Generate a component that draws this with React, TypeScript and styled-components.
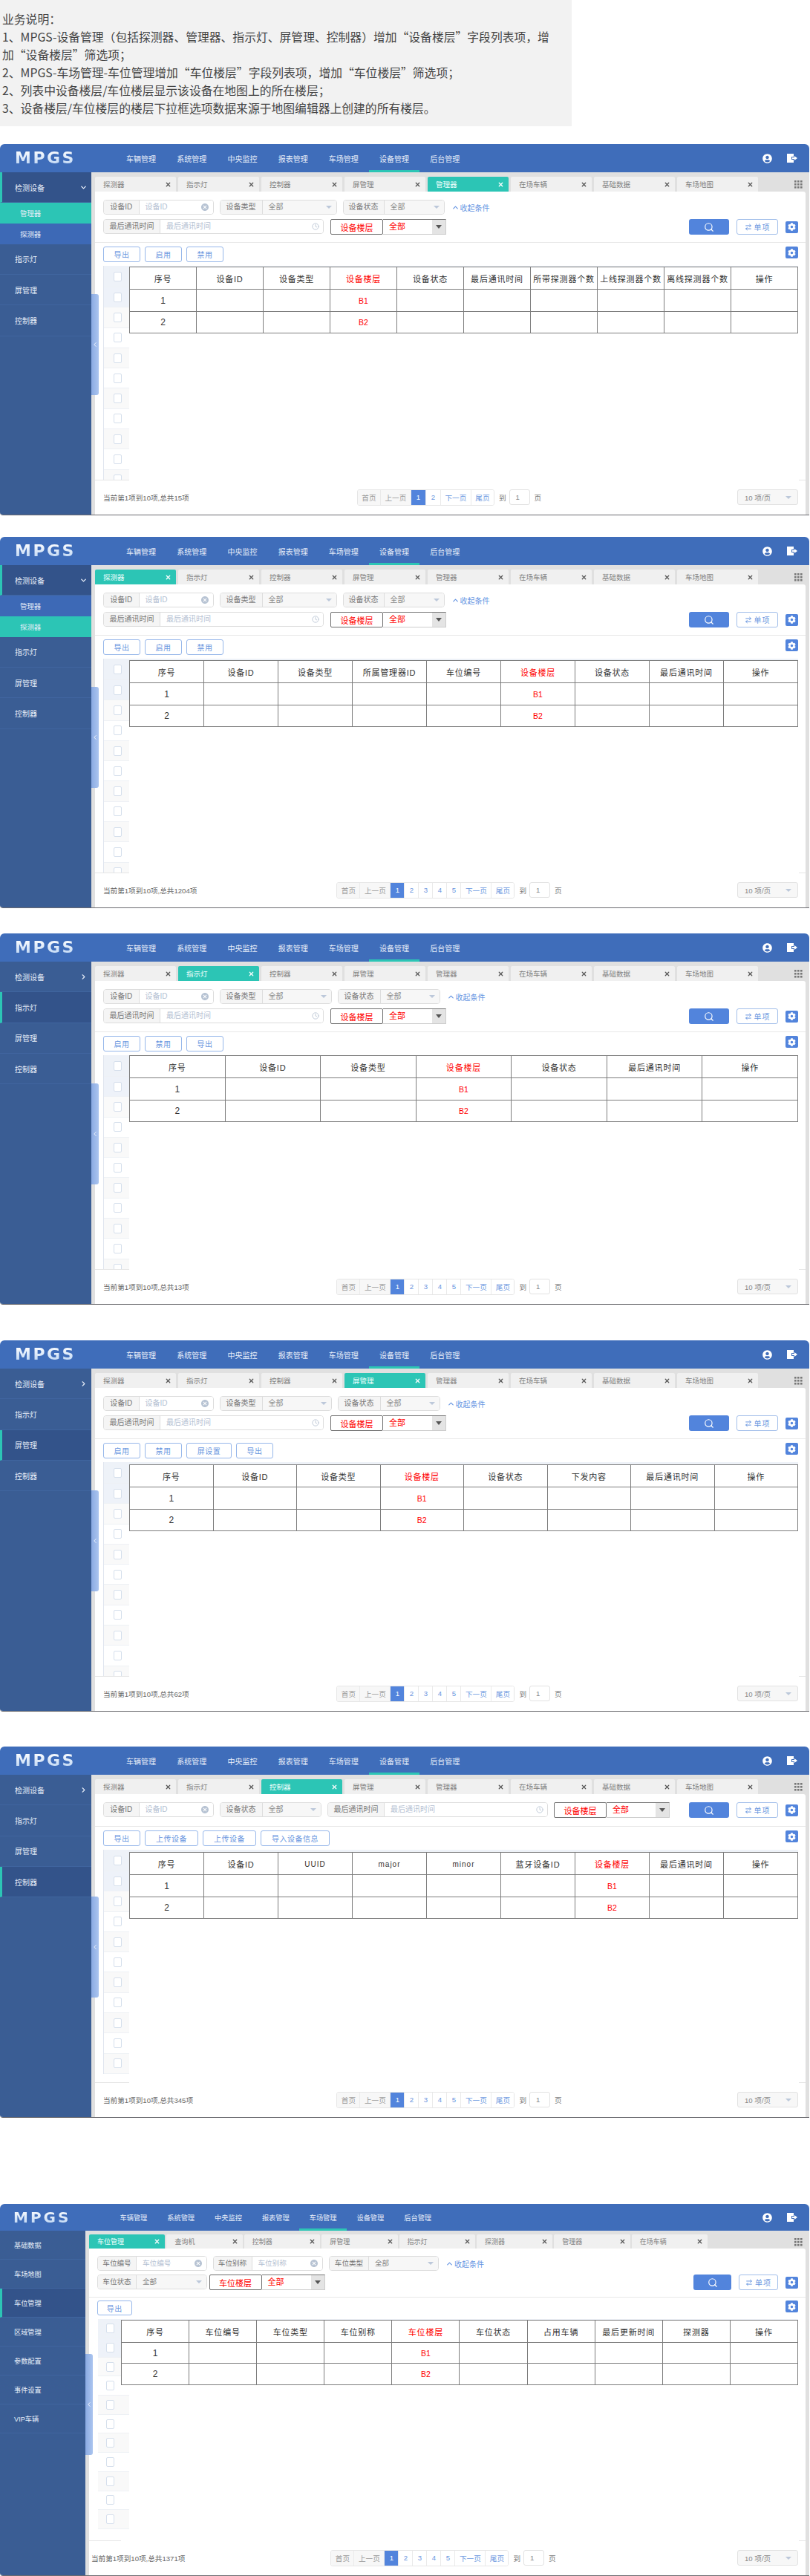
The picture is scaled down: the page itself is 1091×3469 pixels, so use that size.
import React from "react";
import styled, { createGlobalStyle } from "styled-components";
import { ArrowRightLeft, ChevronDown, ChevronLeft, ChevronRight, ChevronUp, Clock, Search, X } from "lucide-react";
import { FaCog, FaUserCircle } from "react-icons/fa";
import { MdCancel } from "react-icons/md";

type Field = {
  kind: "input" | "select" | "time";
  label: string;
  value: string;
  w: number;
  labelW: number;
};

type Screen = {
  top: number;
  height: number;
  compact?: boolean;
  tabs: string[];
  activeTab: number;
  side: { name: string; active?: boolean; open?: boolean; arrow?: boolean; sub?: { name: string; active?: boolean }[] }[];
  activeNav: number;
  row1: Field[];
  row2?: Field[];
  floorLabel: string;
  filterH: number;
  actions: { text: string; w: number }[];
  columns: string[];
  tableOffset: number;
  total: string;
  pages: number;
};

const deviceTabs = ["探测器", "指示灯", "控制器", "屏管理", "管理器", "在场车辆", "基础数据", "车场地图"];
const navItems = ["车辆管理", "系统管理", "中央监控", "报表管理", "车场管理", "设备管理", "后台管理"];

const idField: Field = { kind: "input", label: "设备ID", value: "设备ID", w: 148.5, labelW: 47.5 };
const timeField: Field = { kind: "time", label: "最后通讯时间", value: "最后通讯时间", w: 297, labelW: 76 };
const typeWide: Field = { kind: "select", label: "设备类型", value: "全部", w: 158, labelW: 57 };
const typeNarrow: Field = { kind: "select", label: "设备类型", value: "全部", w: 151, labelW: 57 };
const stateWide: Field = { kind: "select", label: "设备状态", value: "全部", w: 137, labelW: 55 };
const stateNarrow: Field = { kind: "select", label: "设备状态", value: "全部", w: 138, labelW: 57 };

const deviceSide = (current: string): Screen["side"] => [
  { name: "检测设备", arrow: true },
  { name: "指示灯", active: current === "指示灯" },
  { name: "屏管理", active: current === "屏管理" },
  { name: "控制器", active: current === "控制器" },
];

const openSide = (sub: string): Screen["side"] => [
  {
    name: "检测设备",
    open: true,
    arrow: true,
    sub: [
      { name: "管理器", active: sub === "管理器" },
      { name: "探测器", active: sub === "探测器" },
    ],
  },
  { name: "指示灯" },
  { name: "屏管理" },
  { name: "控制器" },
];

const btn = (text: string, w = 50) => ({ text, w });

const screens: Screen[] = [
  {
    top: 24,
    height: 500,
    tabs: deviceTabs,
    activeTab: 4,
    side: openSide("管理器"),
    activeNav: 5,
    row1: [idField, typeWide, stateWide],
    row2: [timeField],
    floorLabel: "设备楼层",
    filterH: 68,
    actions: [btn("导出"), btn("启用"), btn("禁用")],
    columns: ["序号", "设备ID", "设备类型", "设备楼层", "设备状态", "最后通讯时间", "所带探测器个数", "上线探测器个数", "离线探测器个数", "操作"],
    tableOffset: 1,
    total: "当前第1项到10项,总共15项",
    pages: 2,
  },
  {
    top: 29,
    height: 500,
    tabs: deviceTabs,
    activeTab: 0,
    side: openSide("探测器"),
    activeNav: 5,
    row1: [idField, typeWide, stateWide],
    row2: [timeField],
    floorLabel: "设备楼层",
    filterH: 68,
    actions: [btn("导出"), btn("启用"), btn("禁用")],
    columns: ["序号", "设备ID", "设备类型", "所属管理器ID", "车位编号", "设备楼层", "设备状态", "最后通讯时间", "操作"],
    tableOffset: 2,
    total: "当前第1项到10项,总共1204项",
    pages: 5,
  },
  {
    top: 34,
    height: 500,
    tabs: deviceTabs,
    activeTab: 1,
    side: deviceSide("指示灯"),
    activeNav: 5,
    row1: [idField, typeNarrow, stateNarrow],
    row2: [timeField],
    floorLabel: "设备楼层",
    filterH: 68,
    actions: [btn("启用"), btn("禁用"), btn("导出")],
    columns: ["序号", "设备ID", "设备类型", "设备楼层", "设备状态", "最后通讯时间", "操作"],
    tableOffset: 0,
    total: "当前第1项到10项,总共13项",
    pages: 5,
  },
  {
    top: 48,
    height: 500,
    tabs: deviceTabs,
    activeTab: 3,
    side: deviceSide("屏管理"),
    activeNav: 5,
    row1: [idField, typeNarrow, stateNarrow],
    row2: [timeField],
    floorLabel: "设备楼层",
    filterH: 68,
    actions: [btn("启用"), btn("禁用"), btn("屏设置", 61), btn("导出")],
    columns: ["序号", "设备ID", "设备类型", "设备楼层", "设备状态", "下发内容", "最后通讯时间", "操作"],
    tableOffset: 3,
    total: "当前第1项到10项,总共62项",
    pages: 5,
  },
  {
    top: 47,
    height: 500,
    tabs: deviceTabs,
    activeTab: 2,
    side: deviceSide("控制器"),
    activeNav: 5,
    row1: [idField, { ...stateWide, w: 137.5, labelW: 57 }, timeField],
    floorLabel: "设备楼层",
    filterH: 43,
    actions: [btn("导出"), btn("上传设备", 72), btn("上传设备", 72), btn("导入设备信息", 93)],
    columns: ["序号", "设备ID", "UUID", "major", "minor", "蓝牙设备ID", "设备楼层", "最后通讯时间", "操作"],
    tableOffset: 3,
    total: "当前第1项到10项,总共345项",
    pages: 5,
  },
  {
    top: 116,
    height: 501,
    compact: true,
    tabs: ["车位管理", "查询机", "控制器", "屏管理", "指示灯", "探测器", "管理器", "在场车辆"],
    activeTab: 0,
    side: [
      { name: "基础数据" },
      { name: "车场地图" },
      { name: "车位管理", active: true },
      { name: "区域管理" },
      { name: "参数配置" },
      { name: "事件设置" },
      { name: "VIP车辆" },
    ],
    activeNav: 4,
    row1: [
      { kind: "input", label: "车位编号", value: "车位编号", w: 147.5, labelW: 52 },
      { kind: "input", label: "车位别称", value: "车位别称", w: 148.5, labelW: 52 },
      { kind: "select", label: "车位类型", value: "全部", w: 148, labelW: 53 },
    ],
    row2: [{ kind: "select", label: "车位状态", value: "全部", w: 147.5, labelW: 52 }],
    floorLabel: "车位楼层",
    filterH: 65,
    actions: [btn("导出", 46.5)],
    columns: ["序号", "车位编号", "车位类型", "车位别称", "车位楼层", "车位状态", "占用车辆", "最后更新时间", "探测器", "操作"],
    tableOffset: 1,
    total: "当前第1项到10项,总共1371项",
    pages: 5,
  },
];

const FONT = `"Liberation Sans", "Noto Sans CJK SC", sans-serif`;

const GlobalStyle = createGlobalStyle`
  html, body {
    margin: 0;
    padding: 0;
    background: #fff;
  }
  * {
    box-sizing: border-box;
  }
  body {
    font-family: ${FONT};
  }
`;

const Page = styled.div`
  width: 1091px;
`;

const Notes = styled.div`
  width: 770px;
  height: 170px;
  padding: 14px 18px 0 3px;
  background: #f2f2f2;
  color: #444;
  font-family: "Noto Sans CJK SC", sans-serif;
  font-size: 15.8px;
  line-height: 24px;
`;

const Frame = styled.section<{ $top: number; $height: number }>`
  position: relative;
  width: 1090px;
  height: ${(p) => p.$height}px;
  margin-top: ${(p) => p.$top}px;
  display: flex;
  flex-direction: column;
  overflow: hidden;
  border-radius: 6px 6px 0 4px;
  border-bottom: 1px solid #6b6b70;
`;

const TopBar = styled.header<{ $compact?: boolean }>`
  height: ${(p) => (p.$compact ? 36 : 38)}px;
  flex: none;
  display: flex;
  align-items: stretch;
  background: #3f6dba;
`;

const Logo = styled.div<{ $compact?: boolean }>`
  width: ${(p) => (p.$compact ? 78 : 82)}px;
  margin-left: ${(p) => (p.$compact ? 18 : 20)}px;
  align-self: center;
  font-family: "DejaVu Sans", sans-serif;
  font-weight: 700;
  font-size: ${(p) => (p.$compact ? 20 : 22)}px;
  line-height: 22px;
  letter-spacing: ${(p) => (p.$compact ? 3 : 2.5)}px;
  white-space: nowrap;
  background: linear-gradient(#ffffff, #b9d3f3);
  -webkit-background-clip: text;
  background-clip: text;
  color: transparent;
`;

const TopNav = styled.nav<{ $compact?: boolean }>`
  display: flex;
  margin-left: ${(p) => (p.$compact ? 52 : 54)}px;
`;

const NavItem = styled.a<{ $active?: boolean; $compact?: boolean }>`
  width: ${(p) => (p.$compact ? 63.8 : 68.2)}px;
  display: flex;
  align-items: center;
  justify-content: center;
  color: #e8eef9;
  font-size: ${(p) => (p.$compact ? 9.2 : 10)}px;
  box-shadow: ${(p) => (p.$active ? "inset 0 -3px 0 #2cc5b5" : "none")};
`;

const TopIcons = styled.div`
  margin-left: auto;
  margin-right: 16px;
  display: flex;
  align-items: center;
  gap: 20px;
  color: #fff;
`;

const Body = styled.div`
  flex: 1;
  min-height: 0;
  display: flex;
`;

const SideBar = styled.aside<{ $compact?: boolean }>`
  width: ${(p) => (p.$compact ? 115 : 123)}px;
  flex: none;
  background: #3a5d94;
`;

const SideItem = styled.div<{ $active?: boolean; $compact?: boolean }>`
  height: ${(p) => (p.$compact ? 39 : 41.3)}px;
  display: flex;
  align-items: center;
  justify-content: space-between;
  padding: 0 5px 0 ${(p) => (p.$compact ? 19 : 20)}px;
  color: #e6edf8;
  font-size: ${(p) => (p.$compact ? 9.2 : 10)}px;
  background: ${(p) => (p.$active ? "#33538a" : "transparent")};
  border-bottom: 1px solid #40659f;
  border-left: ${(p) => (p.$active ? "3px solid #2cc5b5" : "0")};
  padding-left: ${(p) => (p.$active ? (p.$compact ? 16 : 17) : p.$compact ? 19 : 20)}px;
`;

const SubItem = styled.div<{ $active?: boolean }>`
  height: 27.7px;
  display: flex;
  align-items: center;
  padding-left: 27px;
  color: #e6edf8;
  font-size: 9.4px;
  background: ${(p) => (p.$active ? "#2cc5b5" : "#3d69b6")};
`;

const Main = styled.main`
  flex: 1;
  min-width: 0;
  display: flex;
  flex-direction: column;
  padding: 0 5px;
  background: #e0e0e0;
`;

const TabRow = styled.div<{ $compact?: boolean }>`
  height: ${(p) => (p.$compact ? 24 : 26)}px;
  flex: none;
  padding-top: ${(p) => (p.$compact ? 5 : 6)}px;
  display: flex;
  gap: ${(p) => (p.$compact ? 2 : 3)}px;
`;

const Tab = styled.div<{ $active?: boolean; $compact?: boolean }>`
  width: ${(p) => (p.$compact ? 102.4 : 109)}px;
  display: flex;
  align-items: center;
  justify-content: space-between;
  padding: 0 6px 0 11px;
  font-size: ${(p) => (p.$compact ? 9 : 9.5)}px;
  border-radius: 2px 2px 0 0;
  background: ${(p) => (p.$active ? "#2cc5b5" : "#f0f0f0")};
  color: ${(p) => (p.$active ? "#f2fffd" : "#808080")};
  svg {
    color: ${(p) => (p.$active ? "#fff" : "#555")};
  }
`;

const AppsIcon = styled.svg`
  margin: 5px 4px 0 auto;
  flex: none;
`;

const Content = styled.div`
  flex: 1;
  min-height: 0;
  display: flex;
  flex-direction: column;
  background: #fff;
  border-radius: 0 3px 0 0;
`;

const FilterArea = styled.div<{ $h: number; $compact?: boolean }>`
  height: ${(p) => p.$h + 1}px;
  flex: none;
  padding: ${(p) => (p.$compact ? 10 : 11)}px 10px 0 11px;
  display: flex;
  flex-direction: column;
  gap: ${(p) => (p.$compact ? 5 : 6)}px;
  border-bottom: 1px solid #e8e8e8;
`;

const FilterRow = styled.div<{ $gap?: number }>`
  height: 20px;
  display: flex;
  align-items: flex-start;
  gap: ${(p) => p.$gap ?? 8}px;
`;

const FieldBox = styled.div<{ $w: number; $compact?: boolean }>`
  width: ${(p) => p.$w}px;
  height: 20px;
  flex: none;
  display: flex;
  border: 1px solid #ddd;
  border-radius: 4px;
  overflow: hidden;
  font-size: ${(p) => (p.$compact ? 9.6 : 10)}px;
  line-height: 18px;
  background: #fff;
`;

const FieldLabel = styled.div<{ $w: number }>`
  width: ${(p) => p.$w}px;
  flex: none;
  text-align: center;
  color: #777;
  background: #f5f5f5;
  border-right: 1px solid #ddd;
  white-space: nowrap;
`;

const FieldValue = styled.div<{ $select?: boolean }>`
  flex: 1;
  min-width: 0;
  display: flex;
  align-items: center;
  justify-content: space-between;
  padding: 0 5px 0 8px;
  background: ${(p) => (p.$select ? "#f7f7f7" : "#fff")};
  color: ${(p) => (p.$select ? "#888" : "#b5c1d2")};
`;

const Caret = styled.span`
  width: 0;
  height: 0;
  margin-right: 1px;
  border-left: 4px solid transparent;
  border-right: 4px solid transparent;
  border-top: 4px solid #bcc8da;
`;

const Collapse = styled.a`
  height: 20px;
  margin-left: 1px;
  display: flex;
  align-items: center;
  gap: 1px;
  color: #6594e2;
  font-size: 10px;
  white-space: nowrap;
`;

const FloorLabel = styled.div`
  width: 71px;
  height: 21px;
  flex: none;
  display: flex;
  align-items: center;
  justify-content: center;
  border: 1px solid #6e6e6e;
  border-radius: 2px;
  color: #f00;
  font-size: 11px;
  background: #fff;
`;

const FloorSelect = styled.div`
  width: 85px;
  height: 21px;
  flex: none;
  display: flex;
  justify-content: space-between;
  border-top: 1px solid #777;
  border-right: 1px solid #ccc;
  border-bottom: 1px solid #ccc;
  color: #f00;
  font-size: 11px;
  line-height: 19px;
  padding-left: 8px;
  background: #fff;
`;

const FloorArrow = styled.span`
  width: 18px;
  display: flex;
  align-items: center;
  justify-content: center;
  background: #e4e4e4;
  &::after {
    content: "";
    border-left: 4px solid transparent;
    border-right: 4px solid transparent;
    border-top: 5px solid #555;
  }
`;

const Floor = styled.div`
  display: flex;
  flex: none;
`;

const RightTools = styled.div`
  margin-left: auto;
  display: flex;
  align-items: center;
  gap: 10px;
`;

const SearchButton = styled.button<{ $compact?: boolean }>`
  width: ${(p) => (p.$compact ? 51 : 54)}px;
  height: 21px;
  display: flex;
  align-items: center;
  justify-content: center;
  padding: 0;
  border: 0;
  border-radius: 3px;
  background: #5284dc;
  color: #fff;
`;

const ModeButton = styled.button<{ $compact?: boolean }>`
  width: ${(p) => (p.$compact ? 53 : 56)}px;
  height: 21px;
  display: flex;
  align-items: center;
  justify-content: center;
  gap: 3px;
  padding: 0;
  border: 1px solid #a3bfea;
  border-radius: 3px;
  background: #fff;
  color: #6a97e0;
  font-family: ${FONT};
  font-size: 10px;
  letter-spacing: 1px;
`;

const GearButton = styled.button`
  width: 17px;
  height: 16px;
  flex: none;
  display: flex;
  align-items: center;
  justify-content: center;
  padding: 0;
  border: 0;
  border-radius: 2px;
  background: #5284dc;
  color: #fff;
`;

const ActionRow = styled.div<{ $compact?: boolean }>`
  flex: none;
  height: ${(p) => (p.$compact ? 29 : 31)}px;
  padding: ${(p) => (p.$compact ? 4 : 5)}px 10px 0 11px;
  display: flex;
  align-items: flex-start;
  gap: 6px;
`;

const ActionButton = styled.button<{ $w: number; $compact?: boolean }>`
  width: ${(p) => p.$w}px;
  height: ${(p) => (p.$compact ? 20 : 21)}px;
  padding: 0;
  border: 1px solid #96b7ea;
  border-radius: 3px;
  background: #fff;
  color: #6a97e0;
  font-family: ${FONT};
  font-size: 10px;
  letter-spacing: 0.5px;
`;

const GearSlot = styled.div`
  margin-left: auto;
`;

const GridArea = styled.div`
  flex: 1;
  min-height: 0;
  display: flex;
  align-items: flex-start;
  overflow: hidden;
  margin: 0 10px 0 11px;
`;

const CheckColumn = styled.div<{ $compact?: boolean }>`
  width: ${(p) => (p.$compact ? 43 : 35)}px;
  flex: none;
  border-left: 1px solid ${(p) => (p.$compact ? "#fff" : "#dfe5ee")};
`;

const CheckRow = styled.div<{ $tone: string; $h: number; $left: number }>`
  height: ${(p) => p.$h}px;
  padding-left: ${(p) => p.$left}px;
  display: flex;
  align-items: center;
  background: ${(p) => p.$tone};
  border-bottom: 1px solid #eef1f5;
`;

const CheckBox = styled.span`
  width: 11px;
  height: 13px;
  border: 1px solid #d5dfec;
  border-radius: 2px;
  background: #fff;
`;

const TableSlot = styled.div<{ $offset: number; $compact?: boolean }>`
  flex: 1;
  min-width: 0;
  position: relative;
  margin-left: ${(p) => (p.$compact ? -11 : 0)}px;
  padding-top: ${(p) => p.$offset}px;
  background: linear-gradient(#eef2f8, #eef2f8) top / 100% ${(p) => p.$offset}px no-repeat;
`;

const DataTable = styled.table`
  width: 100%;
  table-layout: fixed;
  border-collapse: collapse;
  background: #fff;
  color: #333;
  font-size: 12px;
  text-align: center;
  th,
  td {
    padding: 0;
    border: 1px solid #7d7d7d;
    font-weight: 400;
    white-space: nowrap;
    overflow: hidden;
  }
  th {
    font-size: 11px;
    letter-spacing: 0.8px;
  }
`;

const RedCell = styled.span<{ $small?: boolean }>`
  color: #f00;
  font-size: ${(p) => (p.$small ? 10.5 : 11)}px;
`;

const LatinHead = styled.span`
  font-size: 10px;
  letter-spacing: 1px;
`;

const Footer = styled.footer<{ $compact?: boolean }>`
  position: relative;
  height: 47px;
  flex: none;
  display: grid;
  grid-template-columns: 1fr auto 1fr;
  align-items: center;
  padding: 0 10px 0 ${(p) => (p.$compact ? 3 : 11)}px;
  color: #666;
  font-size: 9.6px;
  &::before,
  &::after {
    content: "";
    position: absolute;
    top: 0;
    height: 1px;
    background: #e6e6e6;
  }
  &::before {
    left: 0;
    width: ${(p) => (p.$compact ? 43 : 46)}px;
  }
  &::after {
    right: 0;
    width: 9px;
  }
`;

const Pager = styled.div`
  display: flex;
  align-items: center;
`;

const PagerGroup = styled.div`
  display: flex;
  height: 22px;
  border: 1px solid #e6e6e6;
  border-radius: 3px;
  overflow: hidden;
`;

const PageCell = styled.span<{ $w: number; $tone?: "idle" | "on" }>`
  width: ${(p) => p.$w}px;
  display: flex;
  align-items: center;
  justify-content: center;
  border-right: 1px solid #eaeaea;
  color: ${(p) => (p.$tone === "on" ? "#fff" : p.$tone === "idle" ? "#999" : "#6a97e0")};
  background: ${(p) => (p.$tone === "on" ? "#5284dc" : p.$tone === "idle" ? "#f7f7f7" : "#fff")};
  &:last-child {
    border-right: 0;
  }
`;

const PageJump = styled.span`
  margin: 0 4px 0 6px;
  color: #777;
`;

const PageInput = styled.span`
  width: 28px;
  height: 21px;
  display: flex;
  align-items: center;
  padding-left: 8px;
  border: 1px solid #e2e2e2;
  border-radius: 3px;
  color: #888;
`;

const PageSize = styled.div`
  width: 82px;
  height: 21px;
  justify-self: end;
  display: flex;
  align-items: center;
  justify-content: space-between;
  padding: 0 7px 0 9px;
  border: 1px solid #e2e2e2;
  border-radius: 3px;
  background: #f7f7f7;
  color: #888;
`;

const Handle = styled.div<{ $compact?: boolean }>`
  position: absolute;
  left: ${(p) => (p.$compact ? 115 : 123)}px;
  top: 202px;
  width: 10px;
  height: 136px;
  display: flex;
  align-items: center;
  justify-content: center;
  border-radius: 0 3px 3px 0;
  background: linear-gradient(90deg, #8aaae3, #abc5ef);
  color: #fff;
`;

function FilterField({ field, compact }: { field: Field; compact?: boolean }) {
  const isSelect = field.kind === "select";
  return (
    <FieldBox $w={field.w} $compact={compact}>
      <FieldLabel $w={field.labelW}>{field.label}</FieldLabel>
      <FieldValue $select={isSelect}>
        {field.value}
        {field.kind === "input" && <MdCancel size={12} color="#b7c3d3" />}
        {field.kind === "time" && <Clock size={10} color="#b7c3d3" />}
        {isSelect && <Caret />}
      </FieldValue>
    </FieldBox>
  );
}

function FloorFilter({ label }: { label: string }) {
  return (
    <Floor>
      <FloorLabel>{label}</FloorLabel>
      <FloorSelect>
        全部
        <FloorArrow />
      </FloorSelect>
    </Floor>
  );
}

function SearchTools({ compact }: { compact?: boolean }) {
  return (
    <RightTools>
      <SearchButton $compact={compact}>
        <Search size={14} strokeWidth={2} />
      </SearchButton>
      <ModeButton $compact={compact}>
        <ArrowRightLeft size={10} strokeWidth={2.4} />
        单项
      </ModeButton>
      <GearButton>
        <FaCog size={11} />
      </GearButton>
    </RightTools>
  );
}

function Panel({ screen }: { screen: Screen }) {
  const c = screen.compact;
  const rowTones = ["#eef2f9", "#fafafa", "#fff", "#f9f9f9", "#fff", "#f9f9f9", "#fff", "#f9f9f9", "#fff", "#f9f9f9"];
  const rowHeights = c ? [30, 28, 29] : [30, 30, 29];
  const pageNums = Array.from({ length: screen.pages }, (_, i) => i + 1);
  const pageW = screen.pages > 2 ? 19 : 20;

  return (
    <Frame $top={screen.top} $height={screen.height}>
      <TopBar $compact={c}>
        <Logo $compact={c}>MPGS</Logo>
        <TopNav $compact={c}>
          {navItems.map((n, i) => (
            <NavItem key={n} $compact={c} $active={i === screen.activeNav}>
              {n}
            </NavItem>
          ))}
        </TopNav>
        <TopIcons>
          <FaUserCircle size={13} />
          <svg width="14" height="12" viewBox="0 0 14 12">
            <path d="M0 0h9v4H6v4h3v4H0z" fill="#fff" />
            <path d="M7 5h3V3l4 3-4 3V7H7z" fill="#fff" />
          </svg>
        </TopIcons>
      </TopBar>
      <Body>
        <SideBar $compact={c}>
          {screen.side.map((s) => (
            <React.Fragment key={s.name}>
              <SideItem $compact={c} $active={s.active || s.open}>
                {s.name}
                {s.arrow && (s.open ? <ChevronDown size={11} strokeWidth={3} /> : <ChevronRight size={11} strokeWidth={2.5} />)}
              </SideItem>
              {s.sub?.map((u) => (
                <SubItem key={u.name} $active={u.active}>
                  {u.name}
                </SubItem>
              ))}
            </React.Fragment>
          ))}
        </SideBar>
        <Main>
          <TabRow $compact={c}>
            {screen.tabs.map((t, i) => (
              <Tab key={t} $compact={c} $active={i === screen.activeTab}>
                {t}
                <X size={9} strokeWidth={3.2} />
              </Tab>
            ))}
            <AppsIcon width="11" height="11" viewBox="0 0 11 11" fill="#777">
              {[0, 4, 8].map((y) =>
                [0, 4, 8].map((x) => <rect key={`${x}-${y}`} x={x} y={y} width="2.6" height="2.6" />)
              )}
            </AppsIcon>
          </TabRow>
          <Content>
            <FilterArea $h={screen.filterH} $compact={c}>
              <FilterRow>
                {screen.row1.map((f, i) => (
                  <FilterField key={`${f.label}${i}`} field={f} compact={c} />
                ))}
                {screen.row2 ? (
                  <Collapse>
                    <ChevronUp size={11} strokeWidth={2.5} />
                    收起条件
                  </Collapse>
                ) : (
                  <>
                    <FloorFilter label={screen.floorLabel} />
                    <SearchTools />
                  </>
                )}
              </FilterRow>
              {screen.row2 && (
                <FilterRow $gap={c ? 3 : 9}>
                  {screen.row2.map((f) => (
                    <FilterField key={f.label} field={f} compact={c} />
                  ))}
                  <FloorFilter label={screen.floorLabel} />
                  <SearchTools compact={c} />
                </FilterRow>
              )}
            </FilterArea>
            <ActionRow $compact={c}>
              {screen.actions.map((a, i) => (
                <ActionButton key={`${a.text}${i}`} $w={a.w} $compact={c}>
                  {a.text}
                </ActionButton>
              ))}
              <GearSlot>
                <GearButton>
                  <FaCog size={11} />
                </GearButton>
              </GearSlot>
            </ActionRow>
            <GridArea>
              <CheckColumn $compact={c}>
                <CheckRow $tone="#eef2f8" $h={c ? 26 : 29} $left={c ? 11 : 13}>
                  <CheckBox />
                </CheckRow>
                {rowTones.map((tone, i) => (
                  <CheckRow key={i} $tone={tone} $h={c ? 25.7 : 27.3} $left={c ? 11 : 13}>
                    <CheckBox />
                  </CheckRow>
                ))}
              </CheckColumn>
              <TableSlot $offset={screen.tableOffset} $compact={c}>
                <DataTable>
                  <thead>
                    <tr style={{ height: rowHeights[0] }}>
                      {screen.columns.map((h) => (
                        <th key={h}>
                          {h.includes("楼层") ? (
                            <RedCell>{h}</RedCell>
                          ) : h === "major" || h === "minor" || h === "UUID" ? (
                            <LatinHead>{h}</LatinHead>
                          ) : (
                            h
                          )}
                        </th>
                      ))}
                    </tr>
                  </thead>
                  <tbody>
                    {["1", "2"].map((n, r) => (
                      <tr key={n} style={{ height: rowHeights[r + 1] }}>
                        {screen.columns.map((h, i) => (
                          <td key={h}>
                            {i === 0 && n}
                            {h.includes("楼层") && <RedCell $small>{`B${n}`}</RedCell>}
                          </td>
                        ))}
                      </tr>
                    ))}
                  </tbody>
                </DataTable>
              </TableSlot>
            </GridArea>
            <Footer $compact={c}>
              <span>{screen.total}</span>
              <Pager>
                <PagerGroup>
                  <PageCell $w={31} $tone="idle">首页</PageCell>
                  <PageCell $w={41} $tone="idle">上一页</PageCell>
                  {pageNums.map((n) => (
                    <PageCell key={n} $w={pageW} $tone={n === 1 ? "on" : undefined}>
                      {n}
                    </PageCell>
                  ))}
                  <PageCell $w={41}>下一页</PageCell>
                  <PageCell $w={30}>尾页</PageCell>
                </PagerGroup>
                <PageJump>到</PageJump>
                <PageInput>1</PageInput>
                <PageJump>页</PageJump>
              </Pager>
              <PageSize>
                10 项/页
                <Caret />
              </PageSize>
            </Footer>
          </Content>
        </Main>
      </Body>
      <Handle $compact={c}>
        <ChevronLeft size={12} strokeWidth={2} />
      </Handle>
    </Frame>
  );
}

export default function App() {
  return (
    <Page>
      <GlobalStyle />
      <Notes>
        业务说明：
        <br />
        1、MPGS-设备管理（包括探测器、管理器、指示灯、屏管理、控制器）增加“设备楼层”字段列表项，增加“设备楼层”筛选项；
        <br />
        2、MPGS-车场管理-车位管理增加“车位楼层”字段列表项，增加“车位楼层”筛选项；
        <br />
        2、列表中设备楼层/车位楼层显示该设备在地图上的所在楼层；
        <br />
        3、设备楼层/车位楼层的楼层下拉框选项数据来源于地图编辑器上创建的所有楼层。
      </Notes>
      {screens.map((s, i) => (
        <Panel key={i} screen={s} />
      ))}
    </Page>
  );
}
